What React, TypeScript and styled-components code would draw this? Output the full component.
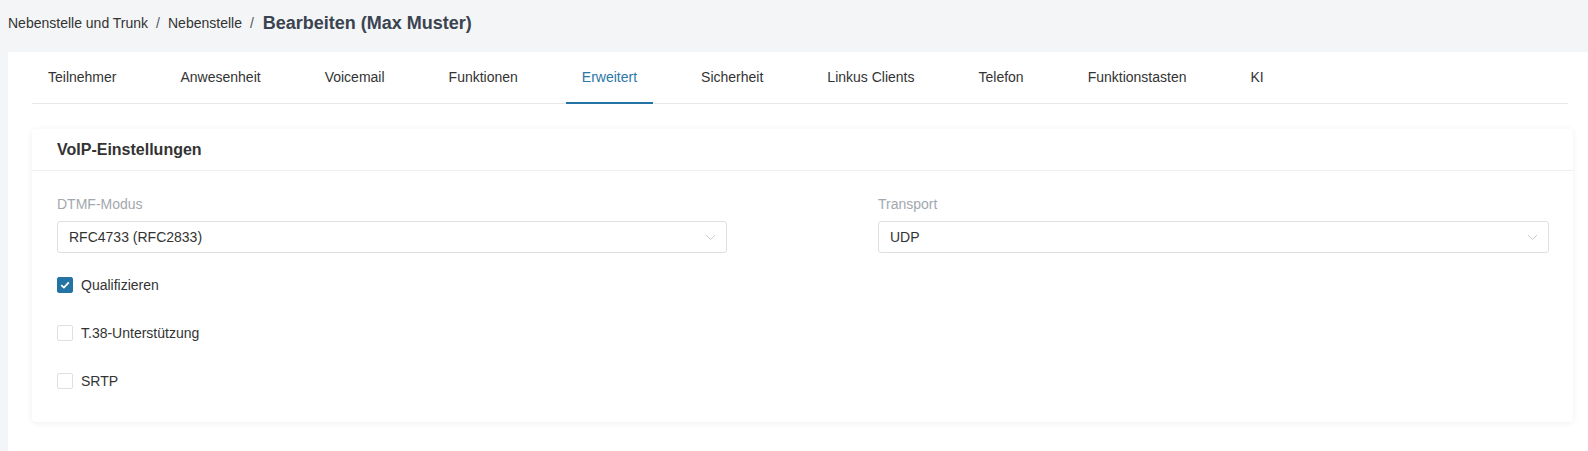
import styled, { createGlobalStyle } from 'styled-components';

const GlobalStyle = createGlobalStyle`
    html, body {
        margin: 0;
        padding: 0;
        background: #f4f5f7;
        font-family: "Liberation Sans", Arial, sans-serif;
        color: #333;
    }
    * { box-sizing: border-box; }
`;

const Page = styled.div`
    display: flex;
    flex-direction: column;
    min-height: 451px;
`;

const Breadcrumb = styled.div`
    display: flex;
    align-items: center;
    height: 52px;
    padding: 0 8px 6px;
    font-size: 14px;
    color: #333;
`;

const Crumb = styled.span`
    color: #333;
`;

const Sep = styled.span`
    margin: 0 8px;
    color: #555;
`;

const Current = styled.span`
    font-size: 18px;
    font-weight: bold;
    color: #3a4350;
    margin-left: 1px;
`;

const Panel = styled.div`
    flex: 1;
    background: #fff;
    margin-left: 8px;
    padding: 0 20px 0 24px;
`;

const TabBar = styled.div`
    display: flex;
    height: 52px;
    border-bottom: 1px solid #e8e8e8;
`;

const Tab = styled.div<{ active?: boolean }>`
    display: flex;
    align-items: center;
    padding: 0 16px 1px;
    margin-right: 32px;
    margin-bottom: -1px;
    font-size: 14px;
    color: ${(p) => (p.active ? '#2a77a8' : '#333')};
    border-bottom: 2px solid ${(p) => (p.active ? '#2374a4' : 'transparent')};
`;

const Card = styled.div`
    margin-top: 25px;
    margin-right: -5px;
    background: #fff;
    border-radius: 4px;
    box-shadow: 0 1px 6px rgba(0, 0, 0, 0.07);
`;

const CardHeader = styled.div`
    display: flex;
    align-items: center;
    height: 42px;
    padding: 0 25px;
    border-bottom: 1px solid #eee;
    font-size: 16px;
    font-weight: bold;
    color: #333;
`;

const CardBody = styled.div`
    padding: 23px 24px 30px 25px;
`;

const Grid = styled.div`
    display: grid;
    grid-template-columns: 670px 671px;
    column-gap: 151px;
`;

const Field = styled.div`
    display: flex;
    flex-direction: column;
`;

const Label = styled.label`
    font-size: 14px;
    line-height: 20px;
    color: #a3a8b0;
    margin-bottom: 7px;
`;

const Select = styled.div`
    display: flex;
    align-items: center;
    justify-content: space-between;
    height: 32px;
    padding: 0 10px 0 11px;
    border: 1px solid #dcdfe4;
    border-radius: 3px;
    font-size: 14px;
    color: #333;
`;

const Checks = styled.div`
    display: flex;
    flex-direction: column;
    gap: 26px;
    margin-top: 21px;
`;

const CheckRow = styled.div`
    display: flex;
    align-items: center;
    height: 22px;
    gap: 8px;
    font-size: 14px;
    color: #333;
`;

const Box = styled.span<{ checked?: boolean }>`
    display: inline-flex;
    align-items: center;
    justify-content: center;
    width: 16px;
    height: 16px;
    border-radius: 2px;
    border: 1px solid ${(p) => (p.checked ? '#2374a4' : '#dcdfe4')};
    background: ${(p) => (p.checked ? '#2374a4' : '#fff')};
`;

const Chevron = () => (
    <svg width="11" height="7" viewBox="0 0 11 7">
        <path d="M1 1 L5.5 5.5 L10 1" fill="none" stroke="#c8ccd2" strokeWidth="1" />
    </svg>
);

const Tick = () => (
    <svg width="10" height="8" viewBox="0 0 10 8">
        <path d="M1.2 4.2 L3.9 6.6 L8.8 1.4" fill="none" stroke="#fff" strokeWidth="1.8" />
    </svg>
);

const tabs = [
    'Teilnehmer',
    'Anwesenheit',
    'Voicemail',
    'Funktionen',
    'Erweitert',
    'Sicherheit',
    'Linkus Clients',
    'Telefon',
    'Funktionstasten',
    'KI',
];

const checks = [
    { label: 'Qualifizieren', checked: true },
    { label: 'T.38-Unterstützung', checked: false },
    { label: 'SRTP', checked: false },
];

export default function App() {
    return (
        <Page>
            <GlobalStyle />
            <Breadcrumb>
                <Crumb>Nebenstelle und Trunk</Crumb>
                <Sep>/</Sep>
                <Crumb>Nebenstelle</Crumb>
                <Sep>/</Sep>
                <Current>Bearbeiten (Max Muster)</Current>
            </Breadcrumb>
            <Panel>
                <TabBar>
                    {tabs.map((t) => (
                        <Tab key={t} active={t === 'Erweitert'}>
                            {t}
                        </Tab>
                    ))}
                </TabBar>
                <Card>
                    <CardHeader>VoIP-Einstellungen</CardHeader>
                    <CardBody>
                        <Grid>
                            <Field>
                                <Label>DTMF-Modus</Label>
                                <Select>
                                    RFC4733 (RFC2833)
                                    <Chevron />
                                </Select>
                            </Field>
                            <Field>
                                <Label>Transport</Label>
                                <Select>
                                    UDP
                                    <Chevron />
                                </Select>
                            </Field>
                        </Grid>
                        <Checks>
                            {checks.map((c) => (
                                <CheckRow key={c.label}>
                                    <Box checked={c.checked}>{c.checked && <Tick />}</Box>
                                    {c.label}
                                </CheckRow>
                            ))}
                        </Checks>
                    </CardBody>
                </Card>
            </Panel>
        </Page>
    );
}
